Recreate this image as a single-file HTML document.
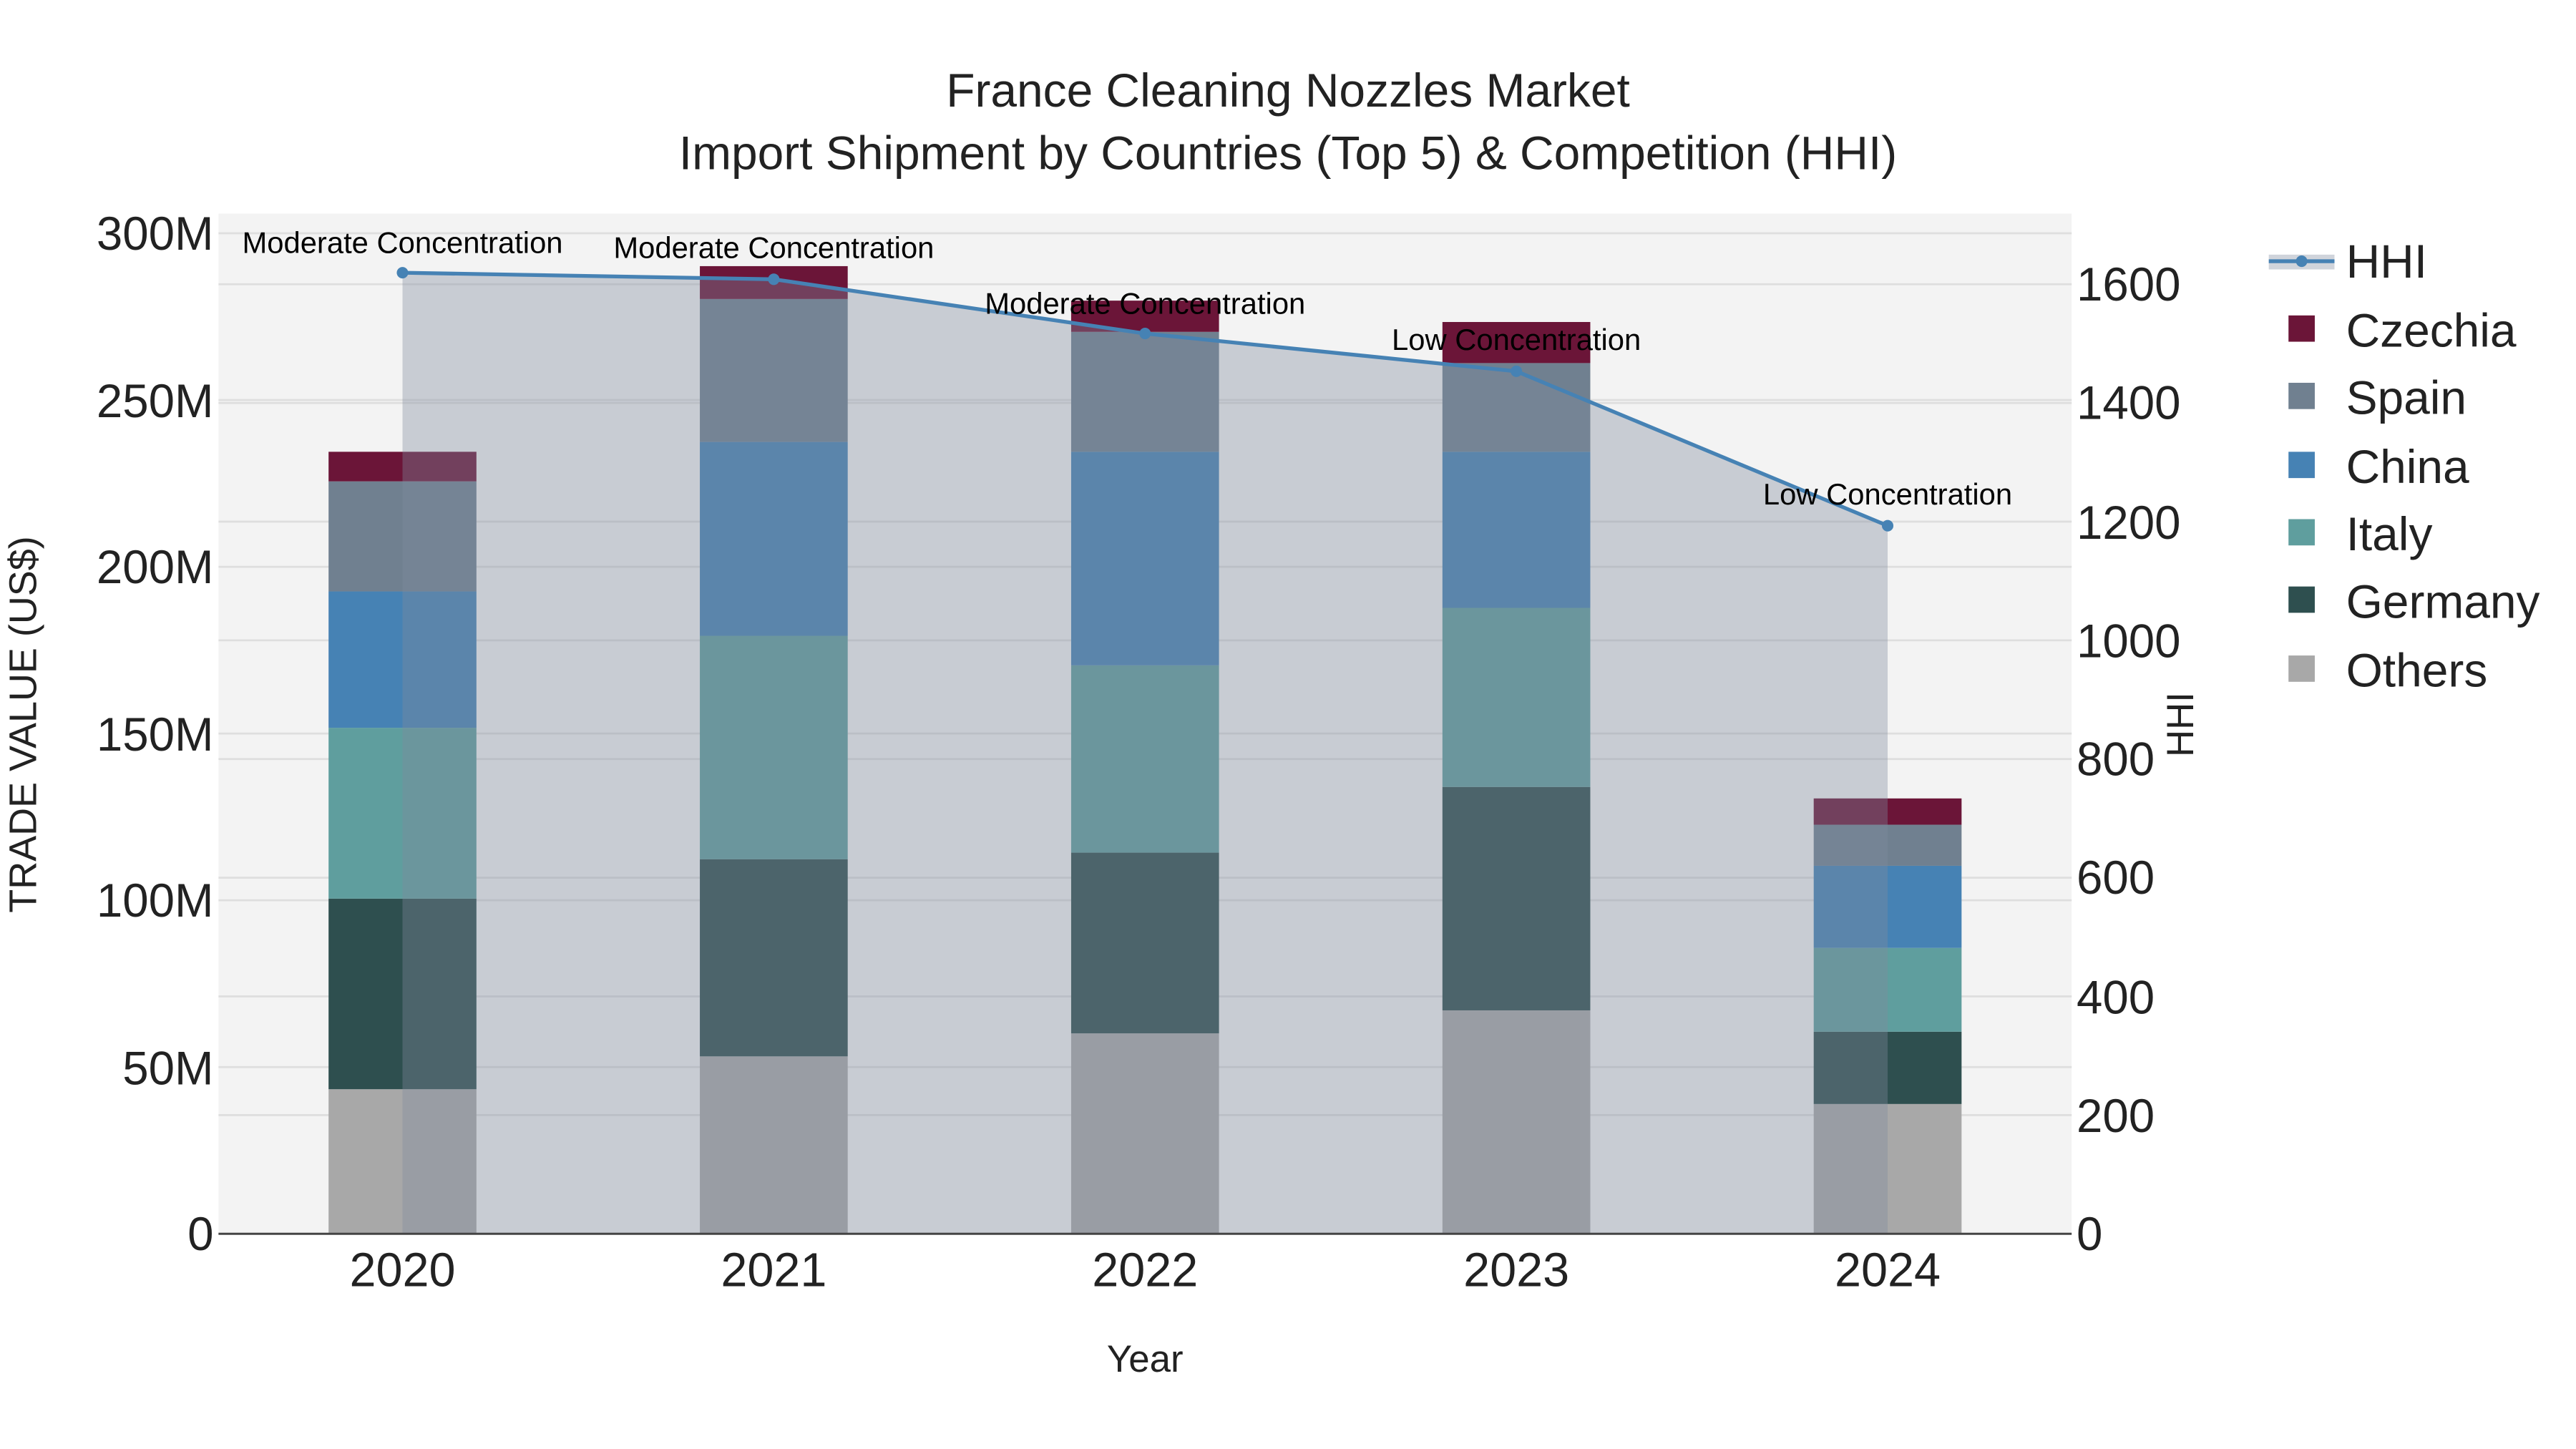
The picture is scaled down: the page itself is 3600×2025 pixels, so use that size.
<!DOCTYPE html>
<html><head><meta charset="utf-8"><style>
html,body{margin:0;padding:0;background:#fff;}
svg{display:block;font-family:"Liberation Sans",sans-serif;}
</style></head><body>
<svg width="3600" height="2025" viewBox="0 0 1568 882" preserveAspectRatio="none" xmlns="http://www.w3.org/2000/svg">
<rect width="1568" height="882" fill="#fff"/>
<rect x="133" y="130" width="1128" height="621" fill="#f3f3f3"/>
<g stroke="#dedede" stroke-width="1.2">
<line x1="133" x2="1261" y1="649.5" y2="649.5"/><line x1="133" x2="1261" y1="548" y2="548"/>
<line x1="133" x2="1261" y1="446.5" y2="446.5"/><line x1="133" x2="1261" y1="345" y2="345"/>
<line x1="133" x2="1261" y1="243.5" y2="243.5"/><line x1="133" x2="1261" y1="142" y2="142"/>
<line x1="133" x2="1261" y1="678.75" y2="678.75"/><line x1="133" x2="1261" y1="606.5" y2="606.5"/>
<line x1="133" x2="1261" y1="534.25" y2="534.25"/><line x1="133" x2="1261" y1="462" y2="462"/>
<line x1="133" x2="1261" y1="389.75" y2="389.75"/><line x1="133" x2="1261" y1="317.5" y2="317.5"/>
<line x1="133" x2="1261" y1="245.25" y2="245.25"/><line x1="133" x2="1261" y1="173" y2="173"/>
</g>
<g id="bars">
<rect x="200" y="663" width="90" height="88" fill="#a8a8a8"/>
<rect x="200" y="547" width="90" height="116" fill="#2e4f4f"/>
<rect x="200" y="443" width="90" height="104" fill="#5f9e9e"/>
<rect x="200" y="360" width="90" height="83" fill="#4682b4"/>
<rect x="200" y="293" width="90" height="67" fill="#708090"/>
<rect x="200" y="275" width="90" height="18" fill="#6b1538"/>
<rect x="426" y="643" width="90" height="108" fill="#a8a8a8"/>
<rect x="426" y="523" width="90" height="120" fill="#2e4f4f"/>
<rect x="426" y="387" width="90" height="136" fill="#5f9e9e"/>
<rect x="426" y="269" width="90" height="118" fill="#4682b4"/>
<rect x="426" y="182" width="90" height="87" fill="#708090"/>
<rect x="426" y="162" width="90" height="20" fill="#6b1538"/>
<rect x="652" y="629" width="90" height="122" fill="#a8a8a8"/>
<rect x="652" y="519" width="90" height="110" fill="#2e4f4f"/>
<rect x="652" y="405" width="90" height="114" fill="#5f9e9e"/>
<rect x="652" y="275" width="90" height="130" fill="#4682b4"/>
<rect x="652" y="202" width="90" height="73" fill="#708090"/>
<rect x="652" y="183" width="90" height="19" fill="#6b1538"/>
<rect x="878" y="615" width="90" height="136" fill="#a8a8a8"/>
<rect x="878" y="479" width="90" height="136" fill="#2e4f4f"/>
<rect x="878" y="370" width="90" height="109" fill="#5f9e9e"/>
<rect x="878" y="275" width="90" height="95" fill="#4682b4"/>
<rect x="878" y="221" width="90" height="54" fill="#708090"/>
<rect x="878" y="196" width="90" height="25" fill="#6b1538"/>
<rect x="1104" y="672" width="90" height="79" fill="#a8a8a8"/>
<rect x="1104" y="628" width="90" height="44" fill="#2e4f4f"/>
<rect x="1104" y="577" width="90" height="51" fill="#5f9e9e"/>
<rect x="1104" y="527" width="90" height="50" fill="#4682b4"/>
<rect x="1104" y="502" width="90" height="25" fill="#708090"/>
<rect x="1104" y="486" width="90" height="16" fill="#6b1538"/>
</g>
<polygon points="245,166 471,170 697,203 923,226 1149,320 1149,751 245,751" fill="rgb(128,138,157)" fill-opacity="0.37"/>
<polyline points="245,166 471,170 697,203 923,226 1149,320" fill="none" stroke="#4682b4" stroke-width="2.3"/>
<g fill="#4682b4"><circle cx="245" cy="166" r="3.5"/><circle cx="471" cy="170" r="3.5"/><circle cx="697" cy="203" r="3.5"/><circle cx="923" cy="226" r="3.5"/><circle cx="1149" cy="320" r="3.5"/></g>
<line x1="133" x2="1261" y1="751" y2="751" stroke="#444" stroke-width="1.3"/>
<g font-size="18.2" fill="#000" text-anchor="middle">
<text x="245" y="154">Moderate Concentration</text>
<text x="471" y="157">Moderate Concentration</text>
<text x="697" y="191">Moderate Concentration</text>
<text x="923" y="213">Low Concentration</text>
<text x="1149" y="307">Low Concentration</text>
</g>
<g font-size="28.7" fill="#222" text-anchor="middle">
<text x="784" y="65">France Cleaning Nozzles Market</text>
<text x="784" y="103">Import Shipment by Countries (Top 5) &amp; Competition (HHI)</text>
</g>
<g font-size="28.5" fill="#222" text-anchor="end">
<text x="130" y="761">0</text><text x="130" y="660">50M</text><text x="130" y="558">100M</text>
<text x="130" y="457">150M</text><text x="130" y="355">200M</text><text x="130" y="254">250M</text><text x="130" y="152">300M</text>
</g>
<g font-size="28.5" fill="#222" text-anchor="start">
<text x="1264" y="761">0</text><text x="1264" y="689">200</text><text x="1264" y="617">400</text>
<text x="1264" y="544">600</text><text x="1264" y="472">800</text><text x="1264" y="400">1000</text>
<text x="1264" y="328">1200</text><text x="1264" y="255">1400</text><text x="1264" y="183">1600</text>
</g>
<g font-size="29" fill="#222" text-anchor="middle">
<text x="245" y="783">2020</text><text x="471" y="783">2021</text><text x="697" y="783">2022</text>
<text x="923" y="783">2023</text><text x="1149" y="783">2024</text>
</g>
<text x="697" y="835" font-size="23" fill="#222" text-anchor="middle">Year</text>
<text transform="translate(22,441) rotate(-90)" font-size="23.5" fill="#222" text-anchor="middle">TRADE VALUE (US$)</text>
<text transform="translate(1335,441) rotate(-90)" font-size="23" fill="#222" text-anchor="middle">HHI</text>
<g>
<rect x="1381" y="155" width="40" height="9" fill="rgb(128,138,157)" fill-opacity="0.37"/>
<line x1="1381" x2="1421" y1="159" y2="159" stroke="#4682b4" stroke-width="2.3"/>
<circle cx="1401" cy="159" r="3.5" fill="#4682b4"/>
<rect x="1393" y="192" width="16" height="16" fill="#6b1538"/>
<rect x="1393" y="233" width="16" height="16" fill="#708090"/>
<rect x="1393" y="275" width="16" height="16" fill="#4682b4"/>
<rect x="1393" y="316" width="16" height="16" fill="#5f9e9e"/>
<rect x="1393" y="357" width="16" height="16" fill="#2e4f4f"/>
<rect x="1393" y="399" width="16" height="16" fill="#a8a8a8"/>
</g>
<g font-size="28.7" fill="#222">
<text x="1428" y="169">HHI</text><text x="1428" y="211">Czechia</text><text x="1428" y="252">Spain</text>
<text x="1428" y="294">China</text><text x="1428" y="335">Italy</text><text x="1428" y="376">Germany</text><text x="1428" y="418">Others</text>
</g>
</svg>
</body></html>
